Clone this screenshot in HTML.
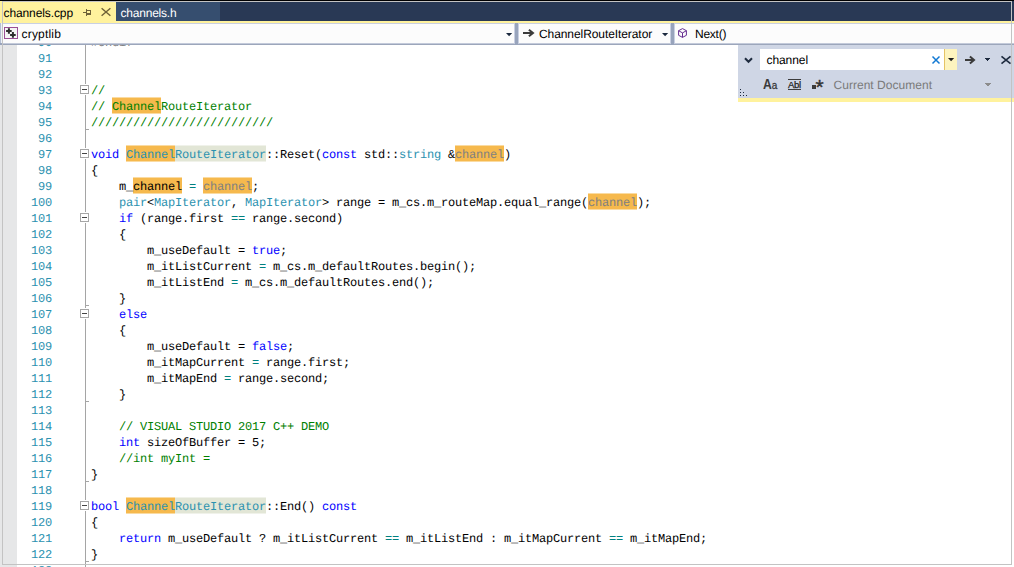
<!DOCTYPE html>
<html lang="en">
<head>
<meta charset="utf-8">
<title>channels.cpp</title>
<style>
html,body{margin:0;padding:0;}
body{width:1014px;height:567px;overflow:hidden;background:#fff;position:relative;font-family:"Liberation Sans",sans-serif;}
.abs,#editor i,.ln,svg{position:absolute;}
i{display:block;font-style:normal;}
svg{overflow:visible;}
#top{left:0;top:0;width:1014px;height:1px;background:#000;}
/* tab strip */
#tabs{left:0;top:1px;width:1014px;height:20px;background:#293955;}
#tab1{left:0;top:1px;width:116px;height:22px;background:#FFF29D;}
#tab2{left:116px;top:2px;width:104px;height:19px;background:#364E6F;}
.ui{font-size:12px;line-height:16px;white-space:nowrap;color:#000;text-rendering:geometricPrecision;}
#yl{left:0;top:21px;width:1014px;height:2px;background:#FFF29D;}
/* navigation bar */
#nav{left:0;top:23px;width:1014px;height:22px;background:#98A4BC;}
#navl{left:0;top:23px;width:1px;height:20px;background:#B4BED3;border-right:1px solid #EEF1F7;}
.dd{top:23px;height:19px;background:#FCFCFC;border:1px solid #C9D0E2;border-bottom:1px solid #C3CADA;box-shadow:0 1px 0 #9CA6BB;box-sizing:content-box;}
/* editor */
#editor{left:0;top:45px;width:1014px;height:522px;background:#fff;overflow:hidden;}
#ed{left:0;top:-45px;width:1014px;height:567px;}
#sel{left:0;top:45px;width:17px;height:522px;background:#E6E7E8;}
#oline{left:85px;top:45px;width:1px;height:522px;background:#A5A5A5;}
.ln{left:0;width:1014px;height:16px;line-height:16px;white-space:pre;font-family:"Liberation Mono",monospace;font-size:12px;letter-spacing:-0.2012px;text-rendering:geometricPrecision;margin-top:1px;}
.n{position:absolute;left:16px;width:36px;text-align:right;color:#2B91AF;}
.c{position:absolute;left:91px;color:#000;}
.k{color:#0000FF}.o{color:#008080}.g{color:#008000}.t{color:#2B91AF}.p{color:#808080}
.h{height:15px;background:#F6B94D;border-top:1px solid #FADBA2;border-bottom:1px solid #FADBA2;}
.r{height:15px;background:#E2E6D6;border-top:1px solid #F0F2EA;border-bottom:1px solid #F0F2EA;}
.box{left:80px;width:7px;height:7px;border:1px solid #A6A6A6;background:#fff;outline:1px solid #fff;}
.box:after{content:"";position:absolute;left:1px;top:3px;width:5px;height:1px;background:#444;}
.tick{left:85px;width:4px;height:1px;background:#A5A5A5;}
/* find panel */
#find{left:738px;top:45px;width:276px;height:53px;background:#CFD6E5;}
#findyl{left:738px;top:98px;width:276px;height:4px;background:#FFF29D;}
#finput{left:760px;top:49px;width:184px;height:21px;background:#fff;}
#fdrop{left:944px;top:49px;width:13px;height:21px;background:#FDF4BF;border-left:1px solid #E5C365;box-sizing:border-box;}
#frame{left:2px;top:1px;width:1008px;height:562px;border:1px solid #C3C3C3;box-sizing:content-box;pointer-events:none;}
</style>
</head>
<body>
<!-- document tabs -->
<div id="tabs" class="abs"></div>
<div id="tab1" class="abs"></div>
<div id="tab2" class="abs"></div>
<div class="abs ui" style="left:3.5px;top:5px;letter-spacing:-0.1px;">channels.cpp</div>
<svg style="left:83px;top:9px" width="8" height="7" viewBox="0 0 8 7" shape-rendering="crispEdges"><path fill="#6F6238" d="M0 3h3v1h-3z M3 0h1v7h-1z M4 1h4v1h-4z M7 1h1v5h-1z M4 4h4v2h-4z"/></svg>
<svg style="left:101px;top:8px" width="10" height="8" viewBox="0 0 10 8"><path stroke="#6F6238" stroke-width="1.4" fill="none" d="M0.6 0.2L9.4 7.8M9.4 0.2L0.6 7.8"/></svg>
<div class="abs ui" style="left:120.5px;top:5px;color:#fff;letter-spacing:-0.21px;">channels.h</div>
<div id="yl" class="abs"></div>
<!-- navigation bar -->
<div id="nav" class="abs"></div>
<div id="navl" class="abs"></div>
<div class="abs dd" style="left:2px;width:511px;"></div>
<div class="abs dd" style="left:518px;width:151px;"></div>
<div class="abs dd" style="left:674px;width:340px;"></div>
<svg style="left:4px;top:27px" width="14" height="12" viewBox="0 0 14 12" shape-rendering="crispEdges"><rect x="0.5" y="0.5" width="13" height="11" fill="#F5F5F5" stroke="#9B4F96"/><path stroke="#2E2E2E" stroke-width="2" fill="none" shape-rendering="auto" d="M2.1 4H7.7M4.9 1.2V6.8M6.1 7.9H11.7M8.9 5.1V10.7"/></svg>
<div class="abs ui" style="left:21.5px;top:26px;letter-spacing:0.2px;">cryptlib</div>
<svg style="left:506px;top:33px" width="7" height="4" viewBox="0 0 7 4"><path fill="#1B293E" d="M0 0H6.2L3.1 3.3Z"/></svg>
<svg style="left:523px;top:28px" width="12" height="10" viewBox="0 0 12 10"><path stroke="#3B3B3B" stroke-width="2" fill="none" d="M0 5H10M5.9 1.7L10 5L5.9 8.3"/></svg>
<div class="abs ui" style="left:539px;top:26px;letter-spacing:-0.08px;">ChannelRouteIterator</div>
<svg style="left:661.8px;top:33px" width="7" height="4" viewBox="0 0 7 4"><path fill="#1B293E" d="M0 0H6.2L3.1 3.3Z"/></svg>
<svg style="left:678px;top:28px" width="9" height="10" viewBox="0 0 9 10"><path stroke="#652D90" stroke-width="1" fill="none" stroke-linejoin="round" d="M4.5 0.6L8.4 2.7V7.3L4.5 9.4L0.6 7.3V2.7ZM0.6 2.7L4.5 4.9L8.4 2.7M4.5 4.9V9.4"/></svg>
<div class="abs ui" style="left:695px;top:26px;letter-spacing:-0.25px;">Next()</div>
<!-- editor -->
<div id="editor" class="abs"><div id="ed" class="abs">
<i id="sel"></i>
<i id="oline"></i>
<i class="h" style="left:112px;top:97px;width:49px"></i>
<i class="r" style="left:126px;top:145px;width:140px"></i>
<i class="h" style="left:126px;top:145px;width:49px"></i>
<i class="h" style="left:455px;top:145px;width:49px"></i>
<i class="h" style="left:133px;top:177px;width:49px"></i>
<i class="h" style="left:203px;top:177px;width:49px"></i>
<i class="h" style="left:588px;top:193px;width:49px"></i>
<i class="r" style="left:126px;top:497px;width:140px"></i>
<i class="h" style="left:126px;top:497px;width:49px"></i>
<i class="box" style="top:85px"></i>
<i class="tick" style="top:129px"></i>
<i class="box" style="top:149px"></i>
<i class="box" style="top:213px"></i>
<i class="tick" style="top:305px"></i>
<i class="box" style="top:309px"></i>
<i class="tick" style="top:401px"></i>
<i class="tick" style="top:481px"></i>
<i class="box" style="top:501px"></i>
<i class="tick" style="top:561px"></i>
<div class="ln" style="top:34px"><span class="n">90</span><span class="c"><span class="p">#endif</span></span></div>
<div class="ln" style="top:50px"><span class="n">91</span></div>
<div class="ln" style="top:66px"><span class="n">92</span></div>
<div class="ln" style="top:82px"><span class="n">93</span><span class="c"><span class="g">//</span></span></div>
<div class="ln" style="top:98px"><span class="n">94</span><span class="c"><span class="g">// ChannelRouteIterator</span></span></div>
<div class="ln" style="top:114px"><span class="n">95</span><span class="c"><span class="g">//////////////////////////</span></span></div>
<div class="ln" style="top:130px"><span class="n">96</span></div>
<div class="ln" style="top:146px"><span class="n">97</span><span class="c"><span class="k">void</span> <span class="t">ChannelRouteIterator</span>::Reset(<span class="k">const</span> std::<span class="t">string</span> &amp;<span class="p">channel</span>)</span></div>
<div class="ln" style="top:162px"><span class="n">98</span><span class="c">{</span></div>
<div class="ln" style="top:178px"><span class="n">99</span><span class="c">    m_channel <span class="o">=</span> <span class="p">channel</span>;</span></div>
<div class="ln" style="top:194px"><span class="n">100</span><span class="c">    <span class="t">pair</span>&lt;<span class="t">MapIterator</span>, <span class="t">MapIterator</span>&gt; range = m_cs.m_routeMap.equal_range(<span class="p">channel</span>);</span></div>
<div class="ln" style="top:210px"><span class="n">101</span><span class="c">    <span class="k">if</span> (range.first <span class="o">==</span> range.second)</span></div>
<div class="ln" style="top:226px"><span class="n">102</span><span class="c">    {</span></div>
<div class="ln" style="top:242px"><span class="n">103</span><span class="c">        m_useDefault = <span class="k">true</span>;</span></div>
<div class="ln" style="top:258px"><span class="n">104</span><span class="c">        m_itListCurrent <span class="o">=</span> m_cs.m_defaultRoutes.begin();</span></div>
<div class="ln" style="top:274px"><span class="n">105</span><span class="c">        m_itListEnd <span class="o">=</span> m_cs.m_defaultRoutes.end();</span></div>
<div class="ln" style="top:290px"><span class="n">106</span><span class="c">    }</span></div>
<div class="ln" style="top:306px"><span class="n">107</span><span class="c">    <span class="k">else</span></span></div>
<div class="ln" style="top:322px"><span class="n">108</span><span class="c">    {</span></div>
<div class="ln" style="top:338px"><span class="n">109</span><span class="c">        m_useDefault = <span class="k">false</span>;</span></div>
<div class="ln" style="top:354px"><span class="n">110</span><span class="c">        m_itMapCurrent <span class="o">=</span> range.first;</span></div>
<div class="ln" style="top:370px"><span class="n">111</span><span class="c">        m_itMapEnd <span class="o">=</span> range.second;</span></div>
<div class="ln" style="top:386px"><span class="n">112</span><span class="c">    }</span></div>
<div class="ln" style="top:402px"><span class="n">113</span></div>
<div class="ln" style="top:418px"><span class="n">114</span><span class="c">    <span class="g">// VISUAL STUDIO 2017 C++ DEMO</span></span></div>
<div class="ln" style="top:434px"><span class="n">115</span><span class="c">    <span class="k">int</span> sizeOfBuffer = 5;</span></div>
<div class="ln" style="top:450px"><span class="n">116</span><span class="c">    <span class="g">//int myInt =</span></span></div>
<div class="ln" style="top:466px"><span class="n">117</span><span class="c">}</span></div>
<div class="ln" style="top:482px"><span class="n">118</span></div>
<div class="ln" style="top:498px"><span class="n">119</span><span class="c"><span class="k">bool</span> <span class="t">ChannelRouteIterator</span>::End() <span class="k">const</span></span></div>
<div class="ln" style="top:514px"><span class="n">120</span><span class="c">{</span></div>
<div class="ln" style="top:530px"><span class="n">121</span><span class="c">    <span class="k">return</span> m_useDefault ? m_itListCurrent <span class="o">==</span> m_itListEnd : m_itMapCurrent <span class="o">==</span> m_itMapEnd;</span></div>
<div class="ln" style="top:546px"><span class="n">122</span><span class="c">}</span></div>
<div class="ln" style="top:562px"><span class="n">123</span></div>
</div></div>
<!-- find panel -->
<div id="find" class="abs"></div>
<div id="findyl" class="abs"></div>
<svg style="left:744.3px;top:56.5px" width="9" height="7" viewBox="0 0 9 7"><path stroke="#1E2B3F" stroke-width="2" fill="none" d="M1 1.2L4.5 4.8L8 1.2"/></svg>
<div id="finput" class="abs"></div>
<div class="abs ui" style="left:766.5px;top:52px;letter-spacing:-0.08px;">channel</div>
<svg style="left:932px;top:56px" width="8" height="8" viewBox="0 0 8 8"><path stroke="#1279D3" stroke-width="1.5" fill="none" d="M0.5 0.5L7.5 7.5M7.5 0.5L0.5 7.5"/></svg>
<div id="fdrop" class="abs"></div>
<svg style="left:948px;top:58px" width="7" height="4" viewBox="0 0 7 4"><path fill="#1E1E1E" d="M0 0H6.2L3.1 3.3Z"/></svg>
<svg style="left:965px;top:55px" width="11" height="10" viewBox="0 0 11 10"><path stroke="#3B3B3B" stroke-width="2" fill="none" d="M0 5H9M4.9 1.6L9 5L4.9 8.4"/></svg>
<svg style="left:985px;top:58px" width="5" height="3" viewBox="0 0 5 3" shape-rendering="crispEdges"><path fill="#1E2B3F" d="M0 0h5v1h-5z M1 1h3v1h-3z M2 2h1v1h-1z"/></svg>
<svg style="left:1001px;top:56px" width="10" height="8" viewBox="0 0 10 8"><path stroke="#1E2B3F" stroke-width="1.6" fill="none" d="M0.5 0.3L9.5 7.7M9.5 0.3L0.5 7.7"/></svg>
<div class="abs" style="left:763px;top:76px;font-size:14px;line-height:16px;color:#3A3A3A;letter-spacing:-0.2px;transform-origin:0 0;transform:scaleX(0.87);font-weight:bold;">A<span style="font-size:11.5px;-webkit-text-stroke:0.3px #3A3A3A;font-weight:normal;">a</span></div>
<div class="abs" style="left:788px;top:79px;width:13px;height:9px;border-top:1px solid #3C3C3C;border-bottom:1px solid #3C3C3C;"></div>
<div class="abs" style="left:788px;top:78px;font-size:9.5px;line-height:13px;color:#222;letter-spacing:-0.25px;-webkit-text-stroke:0.25px #222;">Abl</div>
<div class="abs" style="left:812px;top:85px;width:4px;height:4px;background:#3C3C3C;"></div>
<div class="abs" style="left:815.5px;top:74.5px;font-size:21px;line-height:24px;color:#333;-webkit-text-stroke:0.4px #333;">*</div>
<div class="abs ui" style="left:833.5px;top:77px;color:#7A7A7A;letter-spacing:0.03px;">Current Document</div>
<svg style="left:985px;top:83px" width="6" height="3" viewBox="0 0 6 3" shape-rendering="crispEdges"><path fill="#8C8C8C" d="M0 0h6v1h-6z M1 1h4v1h-4z M2 2h2v1h-2z"/></svg>
<svg style="left:740px;top:89px" width="8" height="8" viewBox="0 0 8 8" shape-rendering="crispEdges"><path fill="#1E2B3F" d="M0 0h1v1h-1z M0 3h1v1h-1z M3 3h1v1h-1z M0 6h1v1h-1z M3 6h1v1h-1z M6 6h1v1h-1z"/></svg>
<div id="frame" class="abs"></div>
<div id="top" class="abs"></div>
</body>
</html>
